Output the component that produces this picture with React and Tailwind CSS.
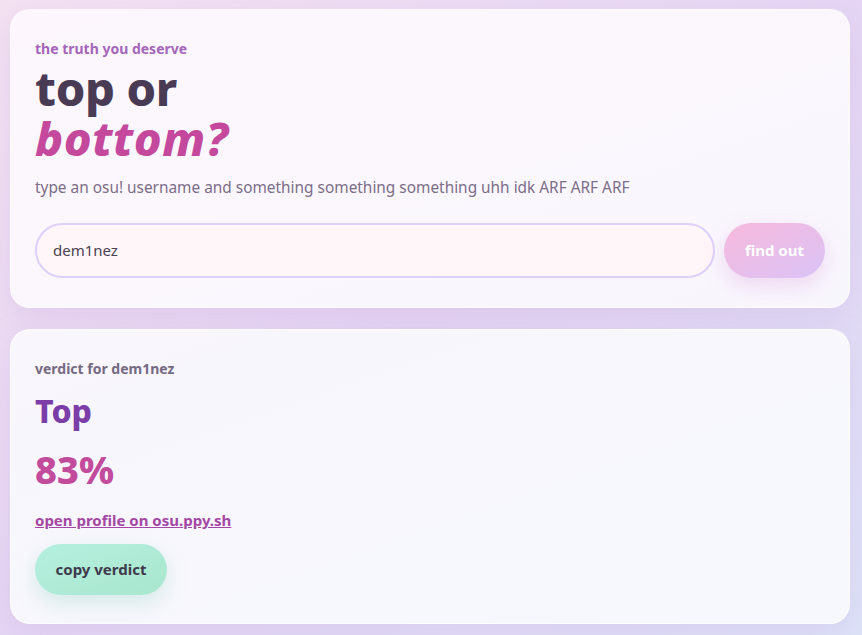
import React from "react";

export default function App() {
  return (
    <div
      className="min-h-[635px] w-full bg-gradient-to-br from-[#f4e2f2] via-[#e6d6f4] to-[#dde3f8] pt-[9px] pl-[10px] pr-[12px] pb-[11px] flex flex-col gap-[21px]"
      style={{ fontFamily: '"Noto Sans", "Open Sans", sans-serif' }}
    >
      <div className="rounded-[20px] bg-gradient-to-br from-[#fdf7fd] to-[#f8f6fd] shadow-[0_10px_30px_rgba(190,160,220,0.25)] border border-white/70 px-[24px] pt-[30px] pb-[29px]">
        <div className="text-[14px] font-bold leading-[18px] text-[#a466b8]">the truth you deserve</div>
        <h1 className="mt-[5px] text-[47px] font-extrabold leading-[50px] tracking-[-0.3px] text-[#4a3b55]">
          <span className="block">top or</span>
          <span className="block italic tracking-[0.5px] text-[#c4489c]">bottom?</span>
        </h1>
        <p className="mt-[15px] text-[15.4px] leading-[20px] text-[#7c6d88]">
          type an osu! username and something something something uhh idk ARF ARF ARF
        </p>
        <div className="mt-[25px] flex items-center gap-[9px]">
          <div className="flex-1 h-[55px] rounded-full border-2 border-[#ddd0fa] bg-[#fff6f9] flex items-center px-[16px] text-[15px] text-[#4a4150]">
            dem1nez
          </div>
          <button className="w-[101px] h-[55px] rounded-full bg-gradient-to-br from-[#f7b9dc] to-[#d9c2f6] text-white text-[15px] font-bold shadow-[0_8px_20px_rgba(220,160,220,0.35)]">
            find out
          </button>
        </div>
      </div>

      <div className="rounded-[20px] bg-gradient-to-br from-[#f9f6fd] to-[#f6f8fe] shadow-[0_10px_30px_rgba(190,160,220,0.25)] border border-white/70 px-[24px] pt-[30px] pb-[28px]">
        <div className="text-[14px] font-bold leading-[18px] text-[#766a82]">verdict for dem1nez</div>
        <div className="mt-[13px] text-[32px] font-extrabold leading-[40px] text-[#7b3ea8]">Top</div>
        <div className="mt-[15px] text-[38px] font-extrabold leading-[46px] text-[#c24b9c]">83%</div>
        <a href="#" className="mt-[18px] inline-block text-[15px] font-bold leading-[20px] text-[#a447a4] underline">
          open profile on osu.ppy.sh
        </a>
        <div className="mt-[12px]">
          <button className="w-[132px] h-[51px] rounded-full bg-gradient-to-br from-[#b5f0df] to-[#a8e6cd] text-[#3f3a4c] text-[15px] font-bold shadow-[0_8px_20px_rgba(150,210,190,0.35)]">
            copy verdict
          </button>
        </div>
      </div>
    </div>
  );
}
